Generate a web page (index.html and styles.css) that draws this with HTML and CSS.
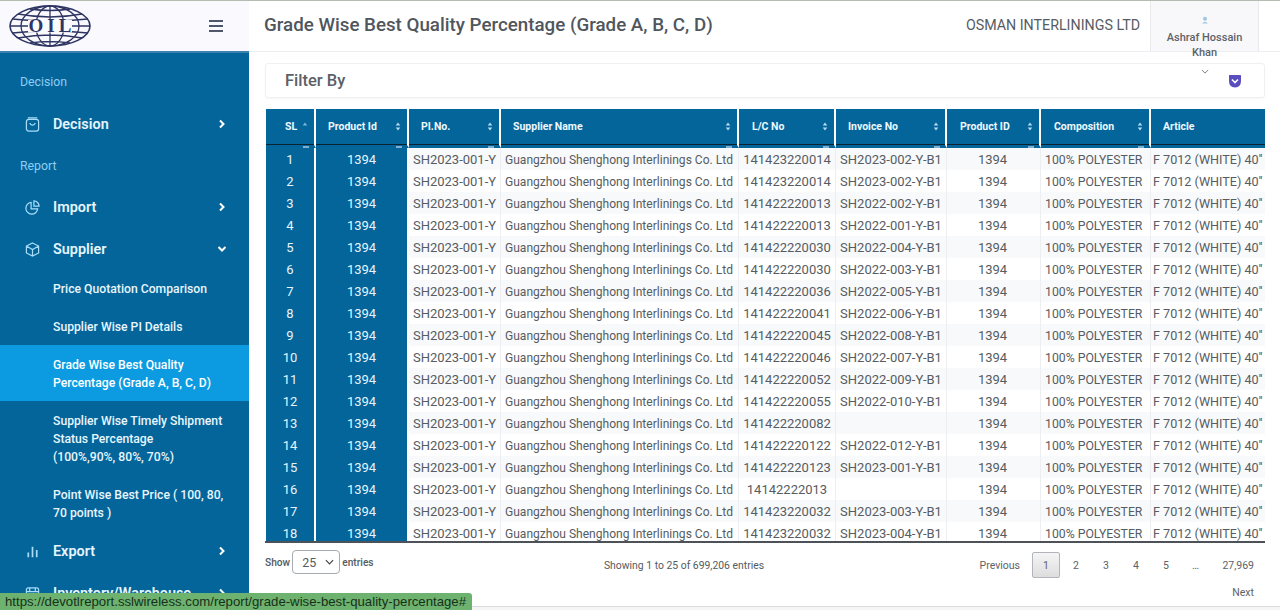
FILE: index.html
```html
<!DOCTYPE html>
<html lang="en">
<head>
<meta charset="utf-8">
<title>Grade Wise Best Quality Percentage</title>
<link rel="stylesheet" href="styles.css">
</head>
<body>
<div class="app">
  <aside class="sidebar">
    <div class="brand">
      <svg class="logo" viewBox="0 0 82 42" fill="none" stroke="#2f3563" stroke-width="1.300">
        <ellipse cx="41" cy="21" rx="40" ry="20" stroke-width="1.600"/>
        <ellipse cx="41" cy="21" rx="29" ry="20"/>
        <ellipse cx="41" cy="21" rx="14" ry="20"/>
        <path d="M41 1V41M9 9Q41 15 73 9M9 33Q41 27 73 33M21 4Q41 7 61 4M21 38Q41 35 61 38M1 21H81M3 14Q41 18 79 14M3 28Q41 24 79 28"/>
        <rect x="19" y="15" width="44" height="12.500" fill="#fafafe" stroke="none"/>
        <text x="43" y="27" text-anchor="middle" class="logo-text">OIL</text>
      </svg>
      <button class="burger" type="button" aria-label="Menu"><span></span><span></span><span></span></button>
    </div>
    <nav class="nav">
      <div class="nav-label first">Decision</div>
      <a class="nav-item" href="#">
        <svg class="nav-icon" viewBox="0 0 16 16"><rect x="1.500" y="2.500" width="13" height="12.500" rx="2.500"/><path d="M3 1H13M5 6.500Q8 11 11 6.500"/></svg>
        <span class="nav-text">Decision</span>
        <svg class="chev" viewBox="0 0 10 10"><path d="M3 1.500 6.500 5 3 8.500"/></svg>
      </a>
      <div class="nav-label">Report</div>
      <a class="nav-item" href="#">
        <svg class="nav-icon" viewBox="0 0 16 16"><path d="M6.500 2.500A6.300 6.300 0 1 0 13.500 9.500H6.500Z"/><path d="M9.500 1A5.500 5.500 0 0 1 15 6.500H9.500Z"/></svg>
        <span class="nav-text">Import</span>
        <svg class="chev" viewBox="0 0 10 10"><path d="M3 1.500 6.500 5 3 8.500"/></svg>
      </a>
      <a class="nav-item open" href="#">
        <svg class="nav-icon" viewBox="0 0 16 16"><path d="M8 1 14.500 4.300V11.700L8 15 1.500 11.700V4.300ZM1.800 4.500 8 8 14.200 4.500M8 8V14.800"/></svg>
        <span class="nav-text">Supplier</span>
        <svg class="chev" viewBox="0 0 10 10"><path d="M1.500 3 5 6.500 8.500 3"/></svg>
      </a>
      <a class="sub-item" href="#">Price Quotation Comparison</a>
      <a class="sub-item" href="#">Supplier Wise PI Details</a>
      <a class="sub-item active" href="#">Grade Wise Best Quality Percentage (Grade A, B, C, D)</a>
      <a class="sub-item" href="#">Supplier Wise Timely Shipment Status Percentage<br>(100%,90%, 80%, 70%)</a>
      <a class="sub-item tail" href="#">Point Wise Best Price ( 100, 80, 70 points )</a>
      <a class="nav-item" href="#">
        <svg class="nav-icon bars" viewBox="0 0 16 16"><path d="M3.500 9V14M8 3V14M12.500 6.500V14"/></svg>
        <span class="nav-text">Export</span>
        <svg class="chev" viewBox="0 0 10 10"><path d="M3 1.500 6.500 5 3 8.500"/></svg>
      </a>
      <a class="nav-item" href="#">
        <svg class="nav-icon" viewBox="0 0 16 16"><rect x="1.500" y="2" width="13" height="12" rx="2"/><path d="M1.500 6H14.500M5 2V6M11 2V6"/></svg>
        <span class="nav-text">Inventory/Warehouse</span>
        <svg class="chev" viewBox="0 0 10 10"><path d="M3 1.500 6.500 5 3 8.500"/></svg>
      </a>
    </nav>
  </aside>
  <main class="main">
    <header class="topbar">
      <h1 class="title">Grade Wise Best Quality Percentage (Grade A, B, C, D)</h1>
      <div class="company">OSMAN INTERLININGS LTD</div>
      <div class="profile">
        <svg class="avatar" viewBox="0 0 8 8"><circle cx="4" cy="2.700" r="2"/><path d="M1 7.500Q4 4 7 7.500Z"/></svg>
        <div class="profile-name">Ashraf Hossain Khan</div>
        <svg class="profile-chev" viewBox="0 0 10 6"><path d="M1 1 5 5 9 1"/></svg>
      </div>
    </header>
    <div class="content">
      <section class="filter">
        <span class="filter-title">Filter By</span>
        <svg class="shield" viewBox="0 0 14 14"><path d="M1 1.500Q1 1 1.500 1H12.500Q13 1 13 1.500V7Q13 13 7 13.500 1 13 1 7Z"/><path class="shield-mark" d="M4 5.500 7 8.500 10 5.500"/></svg>
      </section>
      <div class="table-wrap">
        <table class="grid">
          <colgroup>
            <col class="c1"><col class="c2"><col class="c3"><col class="c4"><col class="c5"><col class="c6"><col class="c7"><col class="c8"><col class="c9">
          </colgroup>
          <thead>
            <tr>
              <th class="th-sl">SL<svg class="sort" viewBox="0 0 6 10"><path class="on" d="M3 .5 5.500 4H.5Z"/></svg></th>
              <th>Product Id<svg class="sort" viewBox="0 0 6 10"><path d="M3 .5 5.500 4H.5ZM3 9.500 .5 6H5.500Z"/></svg></th>
              <th>PI.No.<svg class="sort" viewBox="0 0 6 10"><path d="M3 .5 5.500 4H.5ZM3 9.500 .5 6H5.500Z"/></svg></th>
              <th>Supplier Name<svg class="sort" viewBox="0 0 6 10"><path d="M3 .5 5.500 4H.5ZM3 9.500 .5 6H5.500Z"/></svg></th>
              <th>L/C No<svg class="sort" viewBox="0 0 6 10"><path d="M3 .5 5.500 4H.5ZM3 9.500 .5 6H5.500Z"/></svg></th>
              <th>Invoice No<svg class="sort" viewBox="0 0 6 10"><path d="M3 .5 5.500 4H.5ZM3 9.500 .5 6H5.500Z"/></svg></th>
              <th>Product ID<svg class="sort" viewBox="0 0 6 10"><path d="M3 .5 5.500 4H.5ZM3 9.500 .5 6H5.500Z"/></svg></th>
              <th>Composition<svg class="sort" viewBox="0 0 6 10"><path d="M3 .5 5.500 4H.5ZM3 9.500 .5 6H5.500Z"/></svg></th>
              <th>Article</th>
            </tr>
          </thead>
          <tbody>
            <tr><td class="fix">1</td><td class="fix">1394</td><td>SH2023-001-Y</td><td>Guangzhou Shenghong Interlinings Co. Ltd</td><td>141423220014</td><td>SH2023-002-Y-B1</td><td>1394</td><td>100% POLYESTER</td><td>F 7012 (WHITE) 40''</td></tr>
            <tr><td class="fix">2</td><td class="fix">1394</td><td>SH2023-001-Y</td><td>Guangzhou Shenghong Interlinings Co. Ltd</td><td>141423220014</td><td>SH2023-002-Y-B1</td><td>1394</td><td>100% POLYESTER</td><td>F 7012 (WHITE) 40''</td></tr>
            <tr><td class="fix">3</td><td class="fix">1394</td><td>SH2023-001-Y</td><td>Guangzhou Shenghong Interlinings Co. Ltd</td><td>141422220013</td><td>SH2022-002-Y-B1</td><td>1394</td><td>100% POLYESTER</td><td>F 7012 (WHITE) 40''</td></tr>
            <tr><td class="fix">4</td><td class="fix">1394</td><td>SH2023-001-Y</td><td>Guangzhou Shenghong Interlinings Co. Ltd</td><td>141422220013</td><td>SH2022-001-Y-B1</td><td>1394</td><td>100% POLYESTER</td><td>F 7012 (WHITE) 40''</td></tr>
            <tr><td class="fix">5</td><td class="fix">1394</td><td>SH2023-001-Y</td><td>Guangzhou Shenghong Interlinings Co. Ltd</td><td>141422220030</td><td>SH2022-004-Y-B1</td><td>1394</td><td>100% POLYESTER</td><td>F 7012 (WHITE) 40''</td></tr>
            <tr><td class="fix">6</td><td class="fix">1394</td><td>SH2023-001-Y</td><td>Guangzhou Shenghong Interlinings Co. Ltd</td><td>141422220030</td><td>SH2022-003-Y-B1</td><td>1394</td><td>100% POLYESTER</td><td>F 7012 (WHITE) 40''</td></tr>
            <tr><td class="fix">7</td><td class="fix">1394</td><td>SH2023-001-Y</td><td>Guangzhou Shenghong Interlinings Co. Ltd</td><td>141422220036</td><td>SH2022-005-Y-B1</td><td>1394</td><td>100% POLYESTER</td><td>F 7012 (WHITE) 40''</td></tr>
            <tr><td class="fix">8</td><td class="fix">1394</td><td>SH2023-001-Y</td><td>Guangzhou Shenghong Interlinings Co. Ltd</td><td>141422220041</td><td>SH2022-006-Y-B1</td><td>1394</td><td>100% POLYESTER</td><td>F 7012 (WHITE) 40''</td></tr>
            <tr><td class="fix">9</td><td class="fix">1394</td><td>SH2023-001-Y</td><td>Guangzhou Shenghong Interlinings Co. Ltd</td><td>141422220045</td><td>SH2022-008-Y-B1</td><td>1394</td><td>100% POLYESTER</td><td>F 7012 (WHITE) 40''</td></tr>
            <tr><td class="fix">10</td><td class="fix">1394</td><td>SH2023-001-Y</td><td>Guangzhou Shenghong Interlinings Co. Ltd</td><td>141422220046</td><td>SH2022-007-Y-B1</td><td>1394</td><td>100% POLYESTER</td><td>F 7012 (WHITE) 40''</td></tr>
            <tr><td class="fix">11</td><td class="fix">1394</td><td>SH2023-001-Y</td><td>Guangzhou Shenghong Interlinings Co. Ltd</td><td>141422220052</td><td>SH2022-009-Y-B1</td><td>1394</td><td>100% POLYESTER</td><td>F 7012 (WHITE) 40''</td></tr>
            <tr><td class="fix">12</td><td class="fix">1394</td><td>SH2023-001-Y</td><td>Guangzhou Shenghong Interlinings Co. Ltd</td><td>141422220055</td><td>SH2022-010-Y-B1</td><td>1394</td><td>100% POLYESTER</td><td>F 7012 (WHITE) 40''</td></tr>
            <tr><td class="fix">13</td><td class="fix">1394</td><td>SH2023-001-Y</td><td>Guangzhou Shenghong Interlinings Co. Ltd</td><td>141422220082</td><td></td><td>1394</td><td>100% POLYESTER</td><td>F 7012 (WHITE) 40''</td></tr>
            <tr><td class="fix">14</td><td class="fix">1394</td><td>SH2023-001-Y</td><td>Guangzhou Shenghong Interlinings Co. Ltd</td><td>141422220122</td><td>SH2022-012-Y-B1</td><td>1394</td><td>100% POLYESTER</td><td>F 7012 (WHITE) 40''</td></tr>
            <tr><td class="fix">15</td><td class="fix">1394</td><td>SH2023-001-Y</td><td>Guangzhou Shenghong Interlinings Co. Ltd</td><td>141422220123</td><td>SH2023-001-Y-B1</td><td>1394</td><td>100% POLYESTER</td><td>F 7012 (WHITE) 40''</td></tr>
            <tr><td class="fix">16</td><td class="fix">1394</td><td>SH2023-001-Y</td><td>Guangzhou Shenghong Interlinings Co. Ltd</td><td>14142222013</td><td></td><td>1394</td><td>100% POLYESTER</td><td>F 7012 (WHITE) 40''</td></tr>
            <tr><td class="fix">17</td><td class="fix">1394</td><td>SH2023-001-Y</td><td>Guangzhou Shenghong Interlinings Co. Ltd</td><td>141423220032</td><td>SH2023-003-Y-B1</td><td>1394</td><td>100% POLYESTER</td><td>F 7012 (WHITE) 40''</td></tr>
            <tr><td class="fix">18</td><td class="fix">1394</td><td>SH2023-001-Y</td><td>Guangzhou Shenghong Interlinings Co. Ltd</td><td>141423220032</td><td>SH2023-004-Y-B1</td><td>1394</td><td>100% POLYESTER</td><td>F 7012 (WHITE) 40''</td></tr>
          </tbody>
        </table>
      </div>
      <div class="table-foot">
        <label class="length">Show
          <span class="select"><span>25</span><svg viewBox="0 0 10 6"><path d="M1 1 5 5 9 1"/></svg></span>
          entries</label>
        <div class="info">Showing 1 to 25 of 699,206 entries</div>
        <div class="pager">
          <a class="pg prev" href="#">Previous</a>
          <a class="pg current" href="#">1</a>
          <a class="pg" href="#">2</a>
          <a class="pg" href="#">3</a>
          <a class="pg" href="#">4</a>
          <a class="pg" href="#">5</a>
          <span class="pg dots">…</span>
          <a class="pg last" href="#">27,969</a>
          <a class="pg next" href="#">Next</a>
        </div>
      </div>
    </div>
    <div class="page-foot"></div>
  </main>
</div>
<div class="statusbar">https://devotlreport.sslwireless.com/report/grade-wise-best-quality-percentage#</div>
</body>
</html>
```
FILE: styles.css
```css
* { box-sizing: border-box; }
html, body { margin: 0; height: 100%; overflow: hidden; }
body { font-family: Roboto, "Noto Sans", sans-serif; color: #555b61; background: #fff; }
a { color: inherit; text-decoration: none; }

.app { display: flex; height: 610px; border-top: 1px solid #b5bdb0; }

/* sidebar */
.sidebar { width: 249px; flex: none; display: flex; flex-direction: column; overflow: hidden; background: #03659a; }
.brand { height: 52px; flex: none; display: flex; align-items: center; justify-content: space-between; padding: 0 26px 0 9px; background: #fafafe; border-bottom: 2px solid #3a82ad; }
.logo { width: 82px; height: 42px; display: block; }
.logo-text { font-family: "Liberation Serif", serif; font-weight: 700; font-size: 19px; letter-spacing: 4px; fill: #2f3563; stroke: none; }
.burger { display: flex; flex-direction: column; gap: 3px; width: 14px; padding: 0; border: 0; background: none; }
.burger span { display: block; height: 2px; background: #50566c; }
.nav { display: flex; flex-direction: column; }
.nav-label { padding: 12px 20px 11px; font-size: 12.300px; line-height: 18px; color: #8fcdf2; }
.nav-label.first { padding: 20px 20px 12px; }
.nav-item { height: 42px; flex: none; display: flex; align-items: center; padding: 0 22px 0 25px; color: #e6f5fd; }
.nav-item.open { height: 41px; padding-top: 1px; }
.nav-icon { width: 15px; height: 15px; flex: none; fill: none; stroke: #a9defa; stroke-width: 1.300; }
.nav-icon.bars { stroke-width: 1.800; }
.nav-text { flex: 1; margin-left: 13px; font-size: 14.400px; font-weight: 600; }
.chev { width: 10px; height: 10px; flex: none; fill: none; stroke: #fff; stroke-width: 2; }
.sub-item { display: block; padding: 11px 20px 9px 53px; font-size: 12.200px; line-height: 18px; font-weight: 500; color: #e8f6fe; }
.sub-item.tail { padding-bottom: 8px; }
.sub-item.active { background: #0c9be0; color: #fff; }

/* main */
.main { flex: 1; min-width: 0; display: flex; flex-direction: column; }
.topbar { height: 51px; flex: none; display: flex; align-items: center; padding-left: 15px; border-bottom: 1px solid #eceef1; }
.title { flex: 1; margin: 0 0 2px; font-size: 18.750px; font-weight: 500; color: #50565d; }
.company { margin: 0 10px 2px 0; font-size: 14.250px; color: #575c63; }
.profile { width: 109px; height: 100%; margin-right: 21px; padding-top: 15px; text-align: center; background: #f8f8fb; border-left: 1px solid #e9eaee; border-right: 1px solid #e9eaee; }
.avatar { display: block; width: 8px; height: 8px; margin: 0 auto 6px; fill: #9fc7e4; }
.profile-name { font-size: 11px; line-height: 15px; font-weight: 500; color: #5d6368; padding: 0 8px; }
.profile-chev { display: block; width: 8px; height: 5px; margin: 9px auto 0; fill: none; stroke: #5d6368; stroke-width: 1; }

.content { flex: 1; min-height: 0; padding: 11px 15px 0 16px; display: flex; flex-direction: column; }
.filter { height: 35px; flex: none; display: flex; align-items: center; justify-content: space-between; padding: 0 22px 0 19px; border: 1px solid #eef0f3; border-radius: 3px; box-shadow: 0 1px 2px rgba(0,0,0,.04); }
.filter-title { font-size: 16.500px; font-weight: 500; color: #5b6066; }
.shield { width: 14px; height: 14px; fill: #5a4dbe; }
.shield-mark { fill: none; stroke: #fff; stroke-width: 1.600; }

.table-wrap { height: 434px; flex: none; margin-top: 11px; padding-left: 1px; overflow: hidden; border-bottom: 2px solid #4c5257; }
.grid { width: 1000px; table-layout: fixed; border-collapse: separate; border-spacing: 0; font-size: 13px; }
.c1 { width: 50px; } .c2 { width: 93px; } .c3 { width: 92px; } .c4 { width: 238px; } .c5 { width: 97px; } .c6 { width: 111px; } .c7 { width: 94px; } .c8 { width: 110px; } .c9 { width: 115px; }
.grid th { position: relative; height: 39px; padding: 0 22px 1px 12px; text-align: left; font-size: 10.500px; font-weight: 700; color: #eef8fe; background: #03659a; border-right: 2px solid #fff; border-bottom: 3px solid #03659a; box-shadow: inset 0 -1px 0 #0c2230; }
.grid th.th-sl { padding-left: 19px; }
.grid th:nth-child(5), .grid th:nth-child(7), .grid th:nth-child(8) { padding-left: 13px; }
.grid th:last-child { border-right: 0; }
.grid th:not(:last-child)::after { content: ""; position: absolute; right: 5px; bottom: -3px; width: 6px; height: 2px; background: #7fb0cf; }
.sort { position: absolute; right: 6px; top: 13px; width: 6px; height: 9px; fill: #b7dcf2; }
.sort .on { fill: #7cb7da; }
.grid td { height: 22px; padding: 0 3px; text-align: center; white-space: nowrap; overflow: hidden; color: #565c62; border-right: 1px solid #eceef1; }
.grid tbody tr:nth-child(odd) td { background: #f8f9fb; }
.grid td.fix, .grid tbody tr:nth-child(odd) td.fix { color: #e6f5fd; background: #03659a; border-right: 2px solid #fff; }
.grid td:nth-child(4), .grid td:nth-child(8), .grid td:nth-child(9) { text-align: left; }
.grid td:nth-child(4) { padding: 1px 0 0 4px; font-size: 12.050px; }
.grid td:nth-child(7) { padding-right: 5px; }
.grid td:nth-child(8) { padding: 1px 0 0 4px; font-size: 12.250px; }
.grid td:nth-child(9) { padding-left: 2px; border-right: 0; font-size: 12.600px; }

.table-foot { display: grid; grid-template-columns: 133px 1fr 295px; align-items: start; padding-top: 7px; font-size: 10.400px; font-weight: 500; color: #555b61; }
.length { display: flex; align-items: center; gap: 2px; height: 24px; font-size: 10.200px; white-space: nowrap; }
.select { display: flex; align-items: center; justify-content: space-between; width: 48px; height: 24px; padding: 0 5px 0 9px; font-size: 12.500px; font-weight: 400; border: 1px solid #a6abb0; border-radius: 4px; background: #fff; }
.select svg { width: 9px; height: 6px; fill: none; stroke: #444; stroke-width: 1.300; }
.info { padding-top: 9px; text-align: center; font-weight: 400; }
.pager { display: flex; flex-wrap: wrap; justify-content: flex-end; align-items: center; padding-top: 2px; font-weight: 400; font-size: 10.500px; }
.pg { display: flex; align-items: center; justify-content: center; width: 30px; height: 26px; color: #5d6267; }
.prev, .last, .next { justify-content: flex-end; padding-right: 11px; }
.prev { width: 61px; }
.last, .next { width: 55px; }
.next { height: 28px; }
.dots { width: 29px; }
.pg.current { width: 28px; margin: 0 1px; border: 1px solid #b2b6ba; border-radius: 2px; background: linear-gradient(#f5f5f5, #dddddd); }
.page-foot { height: 4px; flex: none; border-top: 1px solid #d9dbde; background: #f5f5f6; }

.statusbar { position: fixed; left: 0; bottom: 0; height: 17px; width: 472px; padding: 0 5px; font-family: "Liberation Sans", sans-serif; font-size: 13.200px; line-height: 18px; color: #17301a; background: #6db26f; border-top-right-radius: 3px; white-space: nowrap; overflow: hidden; }
```
